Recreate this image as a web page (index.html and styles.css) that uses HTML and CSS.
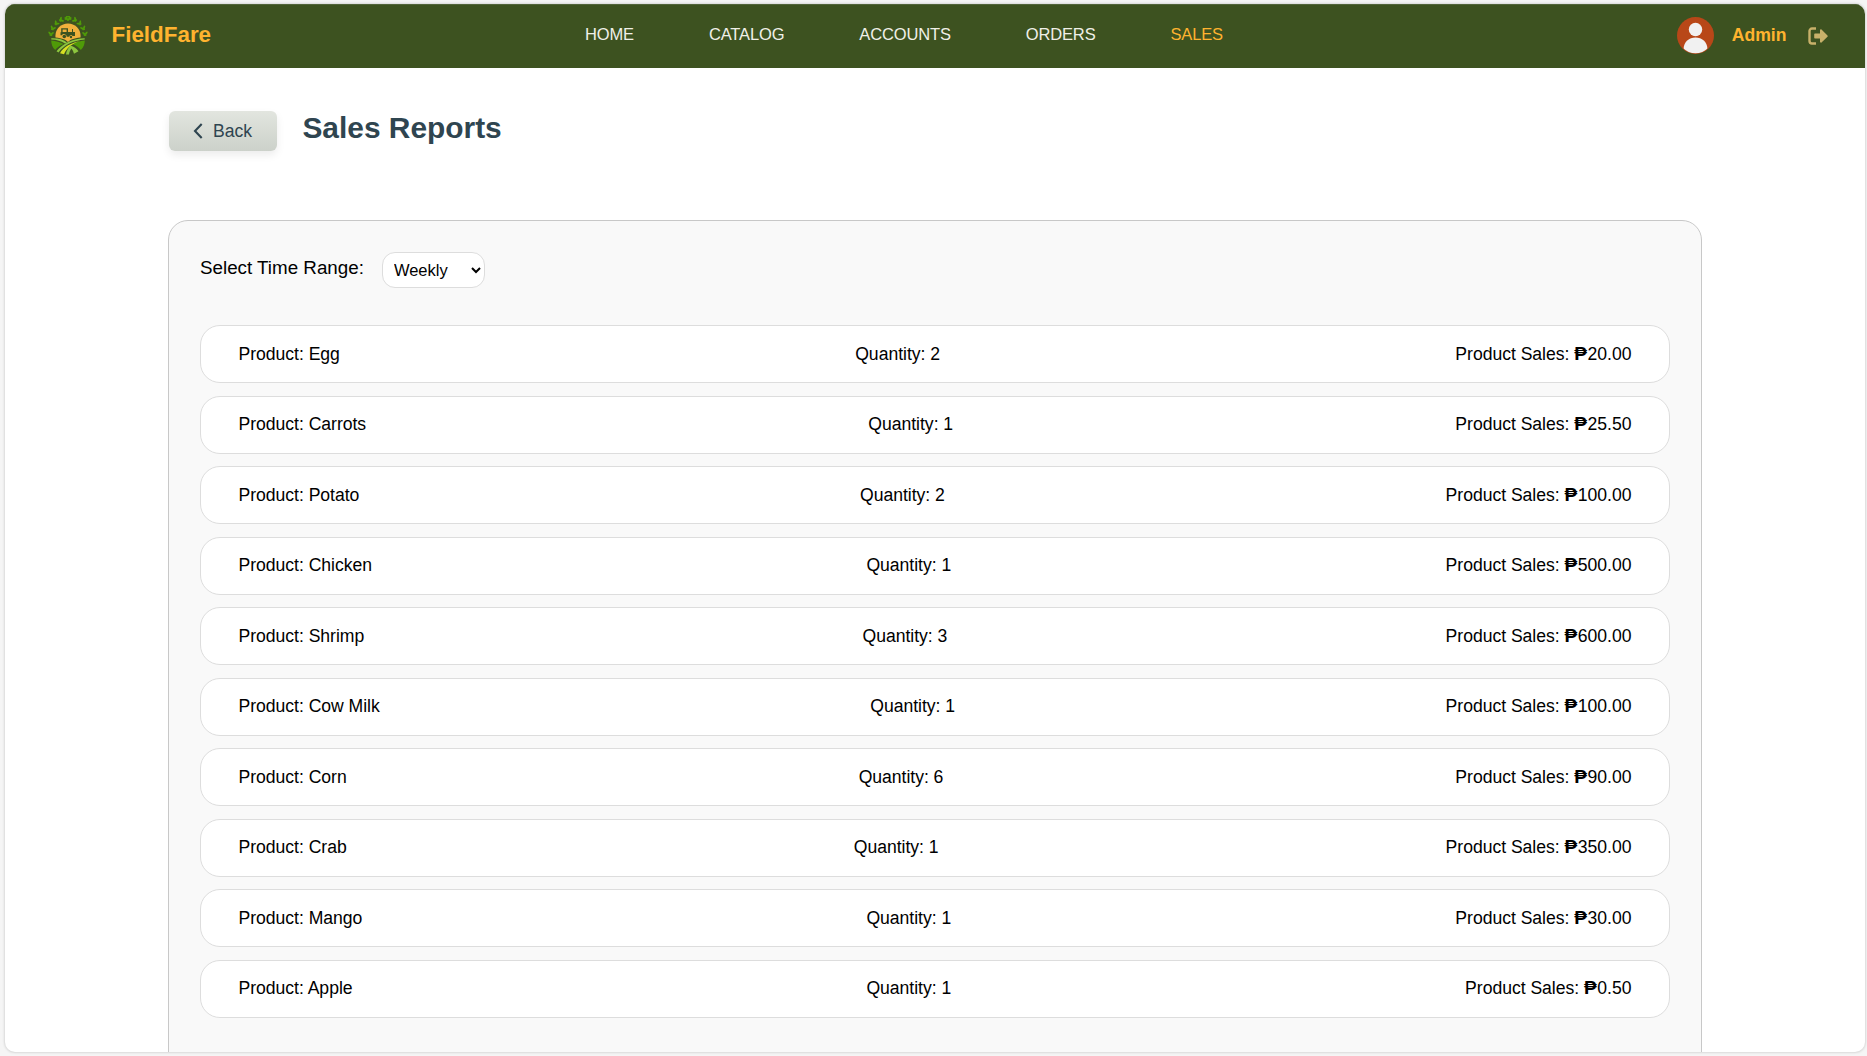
FILE: index.html
```html
<!DOCTYPE html>
<html lang="en">
<head>
<meta charset="utf-8">
<title>FieldFare - Sales Reports</title>
<link rel="stylesheet" href="styles.css">
</head>
<body>
<div class="frame">
  <header class="topbar">
    <div class="brand">
      <svg class="logo" viewBox="0 0 40 40">
        <defs>
          <g id="leaves"><ellipse cx="-2" cy="-1" rx="2.700" ry="1" transform="rotate(45)"/><ellipse cx="2" cy="-1" rx="2.700" ry="1" transform="rotate(-45)"/></g>
          <g id="branch" fill="#4f9a08">
            <use href="#leaves" transform="translate(2.800 20) rotate(5)"/>
            <use href="#leaves" transform="translate(4 14.300) rotate(22)"/>
            <use href="#leaves" transform="translate(7 9) rotate(40)"/>
            <use href="#leaves" transform="translate(11.300 5) rotate(58)"/>
            <use href="#leaves" transform="translate(16.500 2.800) rotate(76)"/>
          </g>
        </defs>
        <use href="#branch"/>
        <use href="#branch" transform="translate(40 0) scale(-1 1)"/>
        <circle cx="20" cy="20" r="12.600" fill="#f0b03c"/>
        <path d="M13.200 12.300h6.800v3.700h4v-3h1v3h2v4h-2.500a1.700 1.700 0 0 0-3.200.8h-2.500a2.700 2.700 0 0 0-5-1.500h-1.300v-3h.7zM14.600 13.500v2.500h4v-2.500z" fill="#3d5220" fill-rule="evenodd"/>
        <circle cx="16.300" cy="20.500" r="1.800" fill="#3d5220"/><circle cx="23" cy="21" r="1.200" fill="#3d5220"/>
        <path d="M2.500 21.500C10 21 17 22.500 20 26 23 22.500 30 21 37.500 21.500 37.500 29 32 38.500 20 38.500S2.500 29 2.500 21.500z" fill="#3d5220"/>
        <path d="M3.200 24.500C8 25 12 26 15.500 28 11.500 29.500 9 31.500 7.200 34 4.500 31.500 3.200 28 3.200 24.500zM36.800 24.500C32 25 28 26 24.500 28 28.500 29.500 31 31.500 32.800 34 35.500 31.500 36.800 28 36.800 24.500z" fill="#4f9a08"/>
        <path d="M3.300 22.300C10 22 15.500 23.500 19 26.500L17 27.500C13 25 9 23.700 3.300 23.500z" fill="#8dc63f"/>
        <path d="M36.700 22.300C26 22.300 14.500 27.500 8.500 35.300l2 1.200C16 29 25 24.500 36.700 23.500z" fill="#8dc63f"/>
        <path d="M32 25C24 26.500 15 31 12 37.200l4 1C18.500 32 24 27.800 32 25z" fill="#d7df23"/>
        <path d="M22.500 29.500C20 32 18.300 35 18 38.500h3c.3-2.500 1.200-4.500 2.500-6 1.200 1.500 2 3.200 2.500 5.200l4.500-2.400c-2-2.800-4.500-4.800-8-5.800z" fill="#8dc63f"/>
      </svg>
      <span class="brand-name">FieldFare</span>
    </div>
    <nav class="menu">
      <a>HOME</a><a>CATALOG</a><a>ACCOUNTS</a><a>ORDERS</a><a class="active">SALES</a>
    </nav>
    <div class="account">
      <svg class="avatar" viewBox="0 0 37 37">
        <defs><clipPath id="disc"><circle cx="18.500" cy="18.500" r="17.800"/></clipPath></defs>
        <circle cx="18.500" cy="18.500" r="18.500" fill="#b84718"/>
        <g fill="#f1f1f1" clip-path="url(#disc)"><circle cx="18.500" cy="12.500" r="6.700"/><path d="M6.500 37V32C7 24.500 12 20.500 18.500 20.500S30 24.500 30.500 32v5z"/></g>
      </svg>
      <span class="user">Admin</span>
      <svg class="logout" viewBox="0 0 20 18">
        <path d="M8 1.500H4A2.500 2.500 0 0 0 1.500 4v10A2.500 2.500 0 0 0 4 16.500h4" fill="none" stroke="#c8b16a" stroke-width="2.400"/>
        <path d="M7 6.500h5V3.200c0-.8.900-1.100 1.500-.6l6 5.800c.4.400.4.900 0 1.300l-6 5.700c-.6.500-1.500.2-1.500-.6v-3.300H7a.8.800 0 0 1-.8-.8V7.300A.8.800 0 0 1 7 6.500z" fill="#c8b16a"/>
      </svg>
    </div>
  </header>
  <main class="content">
    <div class="heading">
      <button class="back"><svg viewBox="0 0 10 16"><path d="M8.700 1L2 8l6.700 7" fill="none" stroke="#2f4550" stroke-width="2.100"/></svg>Back</button>
      <h1>Sales Reports</h1>
    </div>
    <section class="panel">
      <div class="range">
        <label for="range">Select Time Range:</label>
        <select id="range"><option>Weekly</option></select>
      </div>
      <div class="rows">
        <div class="row"><span>Product: Egg</span><span>Quantity: 2</span><span>Product Sales: <b>₱</b>20.00</span></div>
        <div class="row"><span>Product: Carrots</span><span>Quantity: 1</span><span>Product Sales: <b>₱</b>25.50</span></div>
        <div class="row"><span>Product: Potato</span><span>Quantity: 2</span><span>Product Sales: <b>₱</b>100.00</span></div>
        <div class="row"><span>Product: Chicken</span><span>Quantity: 1</span><span>Product Sales: <b>₱</b>500.00</span></div>
        <div class="row"><span>Product: Shrimp</span><span>Quantity: 3</span><span>Product Sales: <b>₱</b>600.00</span></div>
        <div class="row"><span>Product: Cow Milk</span><span>Quantity: 1</span><span>Product Sales: <b>₱</b>100.00</span></div>
        <div class="row"><span>Product: Corn</span><span>Quantity: 6</span><span>Product Sales: <b>₱</b>90.00</span></div>
        <div class="row"><span>Product: Crab</span><span>Quantity: 1</span><span>Product Sales: <b>₱</b>350.00</span></div>
        <div class="row"><span>Product: Mango</span><span>Quantity: 1</span><span>Product Sales: <b>₱</b>30.00</span></div>
        <div class="row"><span>Product: Apple</span><span>Quantity: 1</span><span>Product Sales: <b>₱</b>0.50</span></div>
      </div>
    </section>
  </main>
</div>
</body>
</html>
```
FILE: styles.css
```css
* { box-sizing: border-box; }
body {
  margin: 0;
  height: 1056px;
  padding: 4px 2px 4px 5px;
  overflow: hidden;
  background: #f5f5f5;
  font-family: "Liberation Sans", Arial, sans-serif;
  color: #000;
}
.frame {
  height: 1048px;
  overflow: hidden;
  border-radius: 10px;
  background: #fff;
  box-shadow: 0 0 2px 1px #d9d9d9;
}
.topbar {
  height: 64px;
  display: grid;
  grid-template-columns: 580px 1fr auto;
  align-items: center;
  background: #3d5220;
  border-top: 1px solid #52653a;
  padding: 0 37px 2px 0;
}
.brand { display: flex; align-items: center; padding-left: 43px; }
.logo { width: 40px; height: 40px; }
.brand-name { margin-left: 23.5px; padding-bottom: 1px; font-size: 22.4px; font-weight: bold; color: #ffb32f; }
.menu { display: flex; gap: 74.9px; font-size: 16.5px; letter-spacing: -.13px; color: #f0f0e8; padding-bottom: 2px; }
.menu .active { color: #ffb32f; }
.account { display: flex; align-items: center; }
.avatar { width: 37px; height: 37px; }
.user { margin: 0 21.5px 0 17.5px; padding-bottom: 1px; font-size: 17.6px; font-weight: bold; color: #ffb32f; }
.logout { width: 20px; height: 18px; }
.content { padding: 43px 163px 0; }
.heading { display: flex; height: 109px; align-items: flex-start; }
.back {
  display: flex;
  align-items: center;
  gap: 10px;
  width: 108px;
  height: 40px;
  margin-left: 1px;
  padding: 0 0 0 24px;
  border: 0;
  border-radius: 6px;
  background: linear-gradient(#e2e5df, #ccd1ca);
  box-shadow: 0 4px 9px rgba(0, 0, 0, .08);
  font: 17.6px "Liberation Sans", Arial, sans-serif;
  color: #2f4550;
}
.back svg { width: 10px; height: 16px; }
h1 { margin: 0 0 0 25.4px; font-size: 29.9px; line-height: 34px; color: #2f4550; }
.panel {
  height: 900px;
  width: 1534px;
  padding: 31px 31px 0;
  border: 1px solid #c8c8c8;
  border-radius: 20px;
  background: #f9f9f9;
}
.range { display: flex; align-items: flex-start; height: 73px; font-size: 18.8px; }
.range label { line-height: 32px; }
select {
  width: 103px;
  height: 36px;
  margin-left: 18px;
  padding: 0 0 0 7px;
  border: 1px solid #ddd;
  border-radius: 13px;
  background: #fff;
  font: 16.5px "Liberation Sans", Arial, sans-serif;
  color: #000;
}
.rows { display: flex; flex-direction: column; gap: 12.55px; }
.row {
  display: flex;
  justify-content: space-between;
  height: 58px;
  padding: 0 37.5px;
  border: 1px solid #ddd;
  border-radius: 20px;
  background: #fff;
  font-size: 17.6px;
  letter-spacing: -.03px;
  line-height: 56px;
}
.row span { margin-top: -.48px; }
.row b { display: inline-block; width: 13.4px; line-height: 1; font-size: 19px; }
```
